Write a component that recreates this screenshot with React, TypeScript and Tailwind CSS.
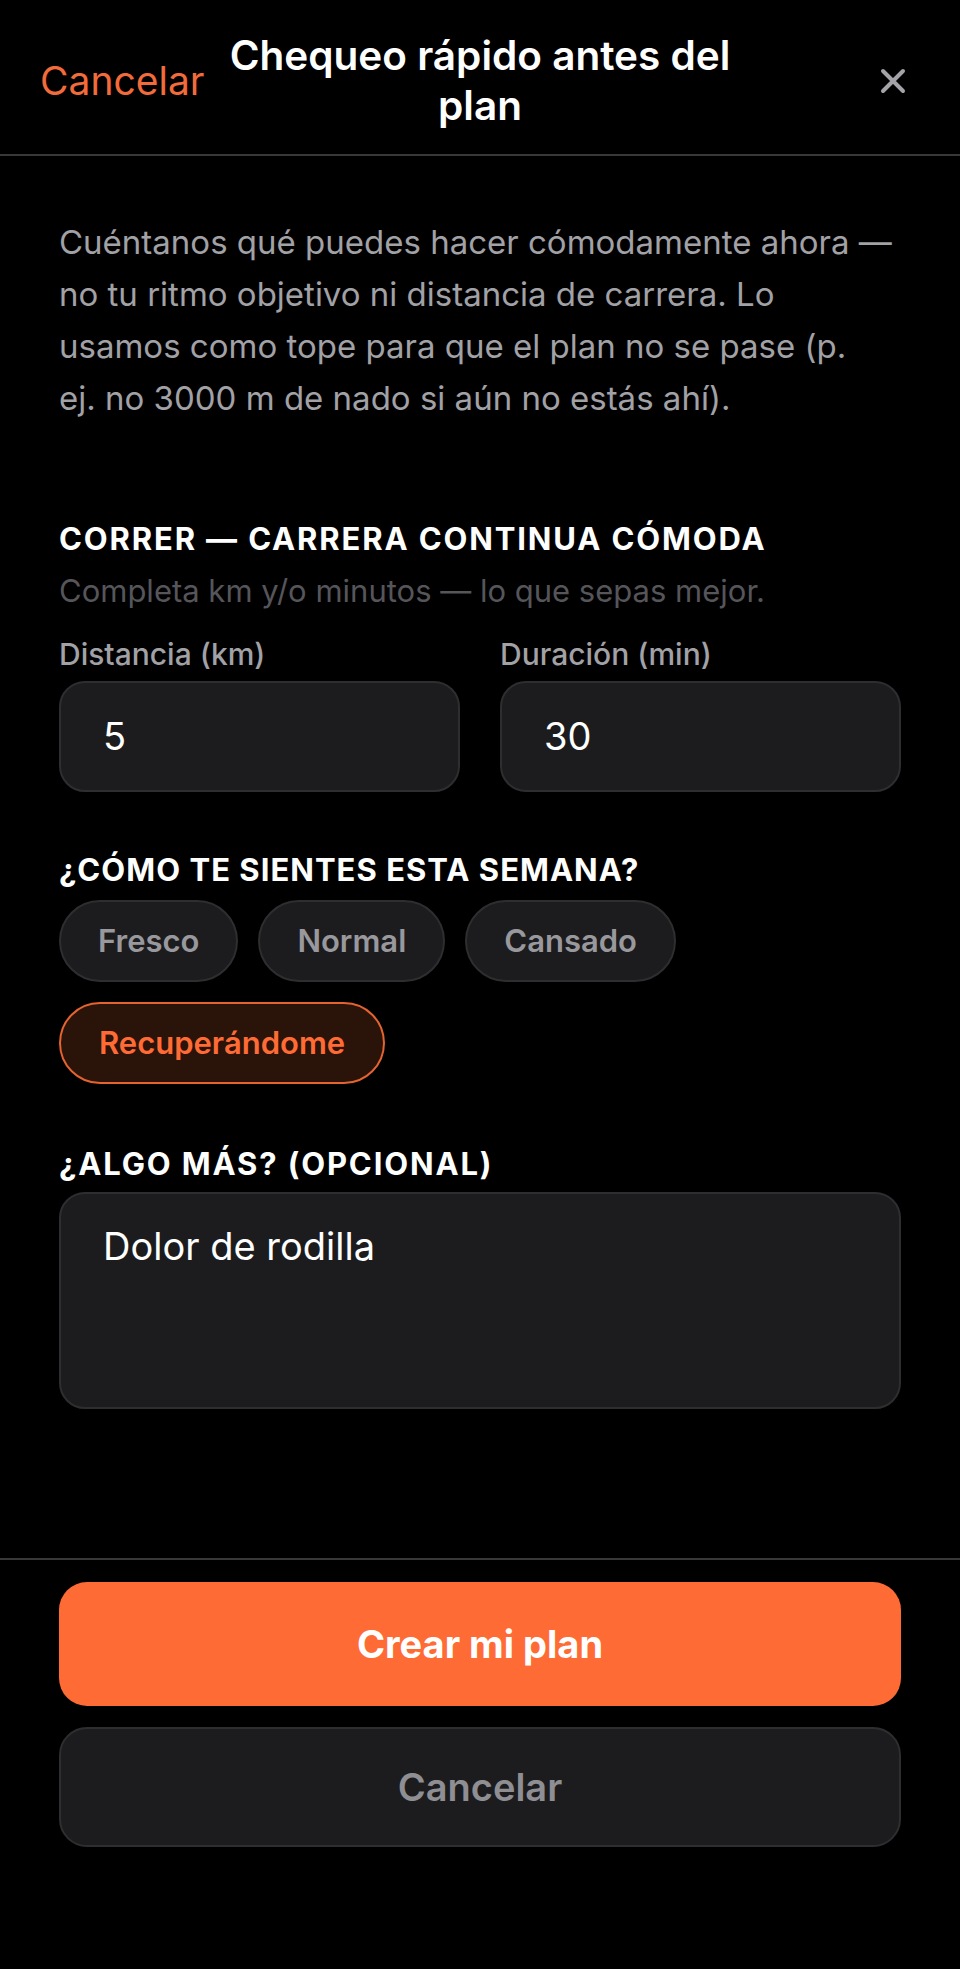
import React from "react"

const font = { fontFamily: "Inter, 'Noto Sans', sans-serif" }

const moods = ["Fresco", "Normal", "Cansado", "Recuperándome"]

const intro = [
  "Cuéntanos qué puedes hacer cómodamente ahora —",
  "no tu ritmo objetivo ni distancia de carrera. Lo",
  "usamos como tope para que el plan no se pase (p.",
  "ej. no 3000 m de nado si aún no estás ahí).",
]

const SectionTitle: React.FC<{ children: React.ReactNode; className?: string }> = ({ children, className }) => (
  <h2 className={`text-[31px] leading-[40px] font-bold text-white uppercase ${className ?? "tracking-[0.06em]"}`}>
    {children}
  </h2>
)

const NumberField: React.FC<{ label: string; value: string }> = ({ label, value }) => (
  <div className="flex flex-col">
    <span className="text-[30px] leading-[40px] font-medium text-[#a1a1a6]">{label}</span>
    <div className="mt-[7px] h-[111px] rounded-[26px] border-2 border-[#2e2e30] bg-[#1c1c1e] px-[42px] flex items-center">
      <span className="text-[38px] text-white">{value}</span>
    </div>
  </div>
)

export default function App() {
  const selected = "Recuperándome"
  return (
    <div className="w-[960px] h-[1969px] bg-black flex flex-col" style={font}>
      {/* header */}
      <header className="h-[156px] pt-[8px] flex items-center justify-between px-[40px] border-b-2 border-[#38383a]">
        <button className="text-[39px] text-[#f26b3a] w-[170px] text-left">Cancelar</button>
        <h1 className="flex-1 text-center text-[40.5px] leading-[50px] font-semibold text-white">
          Chequeo rápido antes del
          <br />
          plan
        </h1>
        <div className="w-[170px] flex justify-end pr-[12px]">
          <svg width="30" height="30" viewBox="0 0 24 24" fill="none" stroke="#a3a3a8" strokeWidth="3.2" strokeLinecap="round">
            <path d="M4 4 L20 20 M20 4 L4 20" />
          </svg>
        </div>
      </header>

      {/* body */}
      <main className="flex-1 px-[59px]">
        <p className="mt-[60px] text-[33px] leading-[52px] text-[#a1a1a6]">
          {intro.map((line) => (
            <span key={line} className="block whitespace-nowrap">
              {line}
            </span>
          ))}
        </p>

        <div className="mt-[95px]">
          <SectionTitle>Correr — carrera continua cómoda</SectionTitle>
          <p className="mt-[12px] text-[31px] leading-[40px] text-[#55555a]">
            Completa km y/o minutos — lo que sepas mejor.
          </p>
          <div className="mt-[23px] grid grid-cols-2 gap-[40px]">
            <NumberField label="Distancia (km)" value="5" />
            <NumberField label="Duración (min)" value="30" />
          </div>
        </div>

        <div className="mt-[58px]">
          <SectionTitle className="tracking-[0.033em]">¿Cómo te sientes esta semana?</SectionTitle>
          <div className="mt-[10px] flex flex-wrap gap-x-[20px] gap-y-[20px] w-[700px]">
            {moods.map((m) =>
              m === selected ? (
                <span
                  key={m}
                  className="h-[82px] px-[38px] rounded-full border-2 border-[#e4632f] bg-[#2a1309] flex items-center text-[31px] font-semibold text-[#ff6b35]"
                >
                  {m}
                </span>
              ) : (
                <span
                  key={m}
                  className="h-[82px] px-[37px] rounded-full border-2 border-[#2e2e30] bg-[#1c1c1e] flex items-center text-[31px] font-semibold text-[#98989d]"
                >
                  {m}
                </span>
              )
            )}
          </div>
        </div>

        <div className="mt-[60px]">
          <SectionTitle>¿Algo más? (opcional)</SectionTitle>
          <div className="mt-[8px] h-[217px] rounded-[26px] border-2 border-[#2e2e30] bg-[#1c1c1e] px-[42px] pt-[24px]">
            <span className="text-[38px] text-white">Dolor de rodilla</span>
          </div>
        </div>
      </main>

      {/* footer */}
      <footer className="border-t-2 border-[#38383a] px-[59px] pt-[22px] pb-[122px] flex flex-col gap-[21px]">
        <button className="h-[124px] rounded-[28px] bg-[#ff6b35] text-[38px] font-bold text-white">
          Crear mi plan
        </button>
        <button className="h-[120px] rounded-[28px] border-2 border-[#2e2e30] bg-[#1c1c1e] text-[38px] font-semibold text-[#8e8e93]">
          Cancelar
        </button>
      </footer>
    </div>
  )
}
